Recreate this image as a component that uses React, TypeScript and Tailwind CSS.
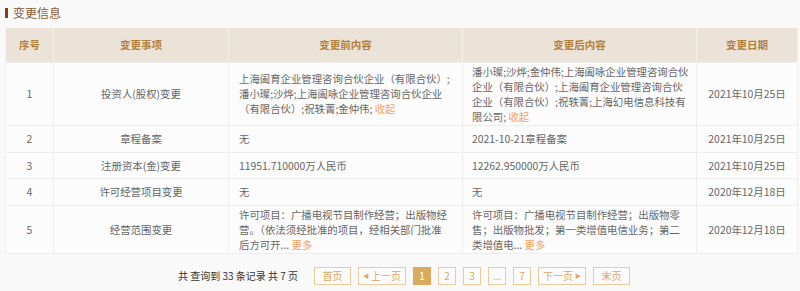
import React from 'react';

type Row = {
  no: number;
  item: string;
  before: React.ReactNode[];
  after: React.ReactNode[];
  date: string;
  h?: string;
};

const Link = ({ children }: { children: React.ReactNode }) => <span className="text-[#f5a05c]">{children}</span>;

const rows: Row[] = [
  {
    no: 1,
    item: '投资人(股权)变更',
    before: [
      '上海阖育企业管理咨询合伙企业（有限合伙）;',
      '潘小璨;沙烨;上海阖咏企业管理咨询合伙企业',
      <>（有限合伙）;祝轶菁;金仲伟; <Link>收起</Link></>,
    ],
    after: [
      '潘小璨;沙烨;金仲伟;上海阖咏企业管理咨询合伙',
      '企业（有限合伙）;上海阖育企业管理咨询合伙',
      '企业（有限合伙）;祝轶菁;上海幻电信息科技有',
      <>限公司; <Link>收起</Link></>,
    ],
    date: '2021年10月25日',
  },
  { no: 2, item: '章程备案', before: ['无'], after: ['2021-10-21章程备案'], date: '2021年10月25日', h: 'h-[27px]' },
  { no: 3, item: '注册资本(金)变更', before: ['11951.710000万人民币'], after: ['12262.950000万人民币'], date: '2021年10月25日', h: 'h-[26px]' },
  { no: 4, item: '许可经营项目变更', before: ['无'], after: ['无'], date: '2020年12月18日', h: 'h-[27px]' },
  {
    no: 5,
    item: '经营范围变更',
    before: [
      '许可项目：广播电视节目制作经营；出版物经',
      '营。（依法须经批准的项目，经相关部门批准',
      <>后方可开... <Link>更多</Link></>,
    ],
    after: [
      '许可项目：广播电视节目制作经营；出版物零',
      '售；出版物批发；第一类增值电信业务；第二',
      <>类增值电... <Link>更多</Link></>,
    ],
    date: '2020年12月18日',
  },
];

function PageButton({ label, active, w }: { label: React.ReactNode; active?: boolean; w: string }) {
  return (
    <div
      className={`${w} h-[18px] flex items-center justify-center border text-[10px] ${
        active ? 'bg-[#dcaa5f] border-[#dcaa5f] text-white' : 'border-[#ebcb9c] text-[#d9a963] bg-[#fbfbfb]'
      }`}
    >
      {label}
    </div>
  );
}

export default function App() {
  return (
    <div
      className="w-[800px] h-[291px] bg-[#f9f9f9] px-[5px] pt-[4px] text-[#666]"
      style={{ fontFamily: '"Noto Sans CJK SC", "Liberation Sans", sans-serif' }}
    >
      {/* 标题 */}
      <div className="flex items-center h-[17px] gap-[5px]">
        <div className="w-[3px] h-[10px] bg-[#8b3a0e]" />
        <div className="text-[12px] leading-[17px] text-[#8d5a34]">变更信息</div>
      </div>

      <table className="mt-[7px] w-[792px] border-collapse table-fixed text-[10.4px] leading-[15px] bg-[#fcfcfc]">
        <colgroup>
          <col className="w-[48px]" />
          <col className="w-[175px]" />
          <col className="w-[234px]" />
          <col className="w-[234px]" />
          <col className="w-[101px]" />
        </colgroup>
        <thead>
          <tr className="h-[34px] bg-[#ece3d8] text-[#b3803a] font-bold text-[10.5px]">
            <th className="border-x border-[#f6f1ea] font-bold">序号</th>
            <th className="border-x border-[#f6f1ea] font-bold">变更事项</th>
            <th className="border-x border-[#f6f1ea] font-bold">变更前内容</th>
            <th className="border-x border-[#f6f1ea] font-bold">变更后内容</th>
            <th className="border-x border-[#f6f1ea] font-bold">变更日期</th>
          </tr>
        </thead>
        <tbody>
          {rows.map((r) => (
            <tr key={r.no} className={r.h ?? ''}>
              <td className="border border-[#eeeeee] text-center align-middle">{r.no}</td>
              <td className="border border-[#eeeeee] text-center align-middle">{r.item}</td>
              <td className="border border-[#eeeeee] px-[10px] py-[1px] align-middle whitespace-nowrap">
                {r.before.map((l, i) => (
                  <div key={i}>{l}</div>
                ))}
              </td>
              <td className="border border-[#eeeeee] px-[9px] py-[1px] align-middle whitespace-nowrap">
                {r.after.map((l, i) => (
                  <div key={i}>{l}</div>
                ))}
              </td>
              <td className="border border-[#eeeeee] text-center align-middle">{r.date}</td>
            </tr>
          ))}
        </tbody>
      </table>

      {/* 分页 */}
      <div className="mt-[13px] flex items-center justify-center pl-[8px] gap-[7px]">
        <div className="text-[10px] text-[#333] mr-[9px]">共 查询到 33 条记录 共 7 页</div>
        <PageButton w="w-[37px]" label="首页" />
        <PageButton w="w-[48px]" label={<><span className="text-[6px] mr-[2px]">◀</span>上一页</>} />
        <PageButton w="w-[18px]" label="1" active />
        <PageButton w="w-[18px]" label="2" />
        <PageButton w="w-[18px]" label="3" />
        <PageButton w="w-[18px]" label="..." />
        <PageButton w="w-[18px]" label="7" />
        <PageButton w="w-[48px]" label={<>下一页<span className="text-[6px] ml-[2px]">▶</span></>} />
        <PageButton w="w-[37px]" label="末页" />
      </div>
    </div>
  );
}
